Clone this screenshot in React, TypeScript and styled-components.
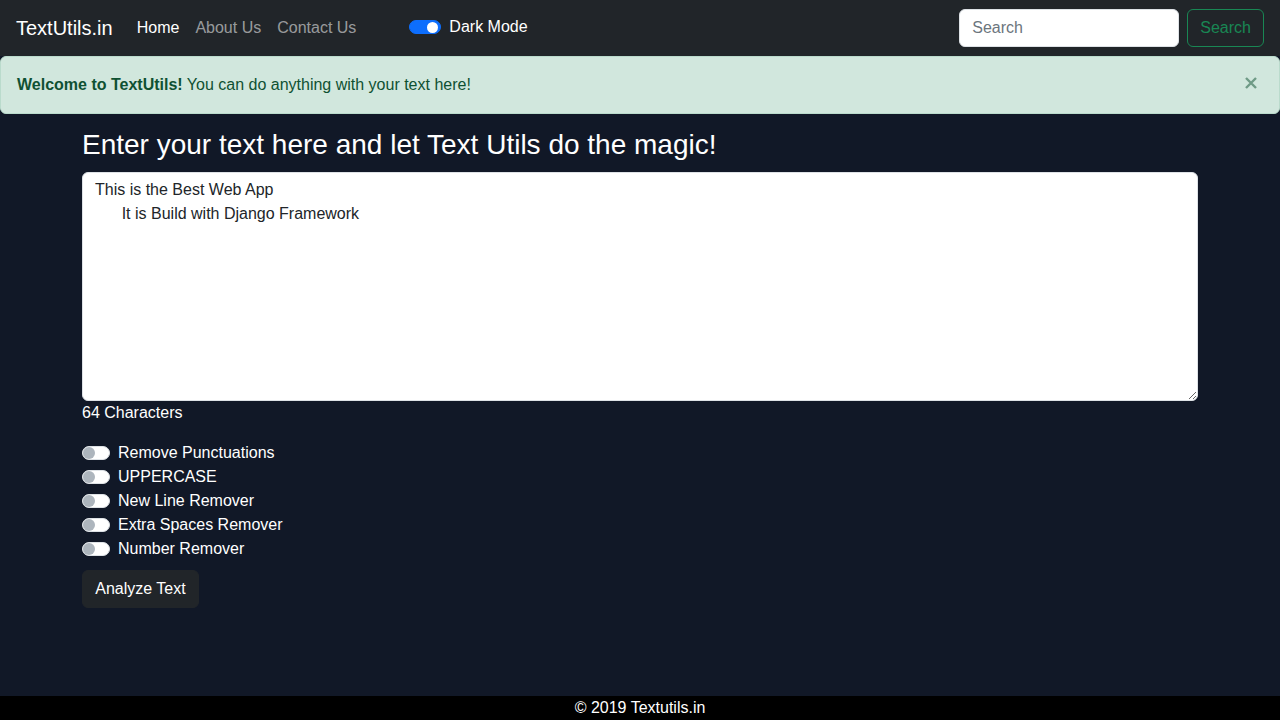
import React, { useState } from 'react';
import styled, { createGlobalStyle } from 'styled-components';

const GlobalStyle = createGlobalStyle`
  * { box-sizing: border-box; }
  body {
    margin: 0;
    font-family: "Liberation Sans", Arial, sans-serif;
    font-size: 16px;
    line-height: 1.5;
    background-color: #111827;
    color: #fff;
  }
`;

const Page = styled.div`
  min-height: 100vh;
  display: flex;
  flex-direction: column;
`;

const Navbar = styled.nav`
  height: 56px;
  background-color: #212529;
  display: flex;
  align-items: center;
  padding: 0 16px;
`;

const Brand = styled.a`
  font-size: 20px;
  line-height: 30px;
  color: #fff;
  text-decoration: none;
  margin-right: 16px;
`;

const NavLinks = styled.ul`
  display: flex;
  list-style: none;
  margin: 0;
  padding: 0;
`;

const NavLink = styled.a<{ $active?: boolean }>`
  display: block;
  padding: 8px;
  color: ${({ $active }) => ($active ? '#fff' : 'rgba(255,255,255,0.55)')};
  text-decoration: none;
  cursor: pointer;
`;

const ModeSwitch = styled.label`
  display: flex;
  align-items: center;
  gap: 8px;
  margin-left: 45px;
  margin-top: -2px;
  color: #fff;
  cursor: pointer;
`;

const Track = styled.span<{ $on?: boolean; $w: number }>`
  position: relative;
  display: inline-block;
  width: ${({ $w }) => $w}px;
  height: 14px;
  border-radius: 8px;
  background-color: ${({ $on }) => ($on ? '#0d6efd' : '#fff')};
  border: 1px solid ${({ $on }) => ($on ? '#0d6efd' : '#dee2e6')};
  flex-shrink: 0;

  &::after {
    content: '';
    position: absolute;
    top: ${({ $on }) => ($on ? 0.5 : 0)}px;
    ${({ $on }) => ($on ? 'right: 2px;' : 'left: 0;')}
    width: ${({ $on }) => ($on ? 11 : 12)}px;
    height: ${({ $on }) => ($on ? 11 : 12)}px;
    border-radius: 50%;
    background-color: ${({ $on }) => ($on ? '#fff' : '#adb5bd')};
  }
`;

const SearchForm = styled.form`
  display: flex;
  margin-left: auto;
  gap: 8px;
`;

const SearchInput = styled.input`
  width: 220px;
  height: 38px;
  padding: 6px 12px;
  font-family: inherit;
  font-size: 16px;
  border: 1px solid #dee2e6;
  border-radius: 6px;
  background: #fff;
  color: #212529;

  &::placeholder {
    color: #6c757d;
  }
`;

const OutlineButton = styled.button`
  height: 38px;
  padding: 6px 12px;
  font-family: inherit;
  font-size: 16px;
  color: #198754;
  background: transparent;
  border: 1px solid #198754;
  border-radius: 6px;
`;

const Alert = styled.div`
  position: relative;
  background-color: #d1e7dd;
  border: 1px solid #badbcc;
  color: #0f5132;
  border-radius: 6px;
  padding: 16px 48px 16px 16px;
  margin-bottom: 16px;

  strong {
    font-weight: bold;
  }
`;

const CloseButton = styled.button`
  position: absolute;
  top: 0;
  right: 0;
  padding: 0 22px;
  height: 100%;
  margin-top: -2px;
  background: transparent;
  border: 0;
  display: flex;
  align-items: center;
  color: #0f5132;
  opacity: 0.5;
  cursor: pointer;
`;

const Container = styled.main`
  width: 1116px;
  margin: 0 auto;
`;

const Heading = styled.h3`
  font-size: 28px;
  font-weight: 500;
  line-height: 1.2;
  margin: -2px 0 10px;
`;

const TextArea = styled.textarea`
  display: block;
  width: 100%;
  height: 229px;
  padding: 5px 12px 6px;
  font-family: inherit;
  font-size: 16px;
  line-height: 1.5;
  color: #212529;
  background: #fff;
  border: 1px solid #dee2e6;
  border-radius: 6px;
  resize: vertical;
  outline: none;
`;

const Count = styled.p`
  margin: 0 0 16px;
`;

const OptionRow = styled.label`
  display: flex;
  align-items: center;
  gap: 8px;
  height: 24px;
  cursor: pointer;
`;

const DarkButton = styled.button`
  margin-top: 9px;
  padding: 6px 12px;
  width: 117px;
  font-family: inherit;
  font-size: 16px;
  line-height: 1.5;
  color: #fff;
  background-color: #212529;
  border: 1px solid #212529;
  border-radius: 6px;
`;

const Footer = styled.footer`
  margin-top: auto;
  background: #000;
  color: #fff;
  text-align: center;
  height: 24px;
  line-height: 24px;
`;

const initialText = 'This is the Best Web App\n      It is Build with Django Framework';

const options = [
  'Remove Punctuations',
  'UPPERCASE',
  'New Line Remover',
  'Extra Spaces Remover',
  'Number Remover',
];

export default function App() {
  const [text, setText] = useState<string>(initialText);
  const [showAlert, setShowAlert] = useState<boolean>(true);

  return (
    <Page>
      <GlobalStyle />
      <Navbar>
        <Brand href="#">TextUtils.in</Brand>
        <NavLinks>
          <li><NavLink $active>Home</NavLink></li>
          <li><NavLink>About Us</NavLink></li>
          <li><NavLink>Contact Us</NavLink></li>
        </NavLinks>
        <ModeSwitch>
          <Track $on $w={32} />
          Dark Mode
        </ModeSwitch>
        <SearchForm onSubmit={(e) => e.preventDefault()}>
          <SearchInput placeholder="Search" />
          <OutlineButton type="submit">Search</OutlineButton>
        </SearchForm>
      </Navbar>

      {showAlert && (
        <Alert>
          <strong>Welcome to TextUtils!</strong> You can do anything with your text here!
          <CloseButton onClick={() => setShowAlert(false)} aria-label="Close">
            <svg width="12" height="12" viewBox="0 0 12 12">
              <path d="M1 1L11 11M11 1L1 11" stroke="currentColor" strokeWidth="2.4" />
            </svg>
          </CloseButton>
        </Alert>
      )}

      <Container>
        <Heading>Enter your text here and let Text Utils do the magic!</Heading>
        <TextArea value={text} onChange={(e) => setText(e.target.value)} />
        <Count>{text.length} Characters</Count>
        {options.map((o) => (
          <OptionRow key={o}>
            <Track $w={28} />
            {o}
          </OptionRow>
        ))}
        <DarkButton>Analyze Text</DarkButton>
      </Container>

      <Footer>© 2019 Textutils.in</Footer>
    </Page>
  );
}
